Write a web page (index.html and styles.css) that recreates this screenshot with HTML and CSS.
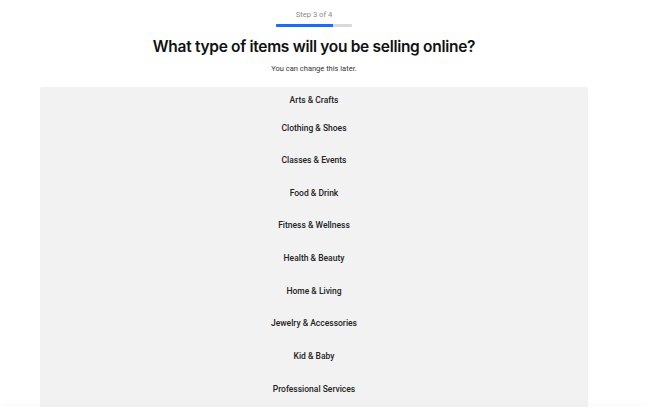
FILE: index.html
```html
<!DOCTYPE html>
<html lang="en">
<head>
<meta charset="utf-8">
<title>Step 3 of 4</title>
<link rel="stylesheet" href="styles.css">
</head>
<body>
<div class="page">
  <header class="progress">
    <div class="step-label">Step 3 of 4</div>
    <div class="track"><div class="fill" style="width: 75%"></div></div>
  </header>
  <h1 class="title">What type of items will you be selling online?</h1>
  <p class="subtitle">You can change this later.</p>
  <ul class="options">
    <li class="option first">Arts &amp; Crafts</li>
    <li class="option">Clothing &amp; Shoes</li>
    <li class="option">Classes &amp; Events</li>
    <li class="option">Food &amp; Drink</li>
    <li class="option">Fitness &amp; Wellness</li>
    <li class="option">Health &amp; Beauty</li>
    <li class="option">Home &amp; Living</li>
    <li class="option">Jewelry &amp; Accessories</li>
    <li class="option">Kid &amp; Baby</li>
    <li class="option">Professional Services</li>
  </ul>
</div>
<div class="footer-edge"></div>
</body>
</html>
```

FILE: styles.css
```css
html, body {
  margin: 0;
  padding: 0;
  background: #ffffff;
  overflow: hidden;
  height: 409px;
}
body {
  font-family: Roboto, "Noto Sans", sans-serif;
  color: #1a1a1a;
}
.page {
  width: 628px;
  display: flex;
  flex-direction: column;
  align-items: center;
}
.progress {
  margin-top: 9px;
  display: flex;
  flex-direction: column;
  align-items: center;
}
.step-label {
  font-size: 7.6px;
  line-height: 11px;
  color: #8a8a8a;
}
.track {
  margin-top: 4px;
  width: 76px;
  height: 3px;
  background: #d9d9d9;
  border-radius: 1px;
  overflow: hidden;
}
.fill {
  height: 100%;
  background: #1a6ef5;
}
.title {
  margin: 9px 0 0;
  font-family: Inter, "Noto Sans", sans-serif;
  font-size: 15.5px;
  line-height: 22px;
  font-weight: 600;
  letter-spacing: -0.3px;
  color: #111;
}
.subtitle {
  margin: 5px 0 0;
  font-size: 7.5px;
  line-height: 12px;
  color: #333;
}
.options {
  list-style: none;
  margin: 12px 0 0;
  padding: 2px 0 12px;
  width: 548px;
  background: #f2f2f2;
  border-radius: 2px 2px 0 0;
}
.option {
  height: 32.67px;
  line-height: 32.67px;
  text-align: center;
  font-size: 8.5px;
  font-weight: 500;
  color: #222;
}
.option.first {
  height: 22.5px;
  line-height: 22px;
}
.footer-edge {
  position: fixed;
  left: 0;
  right: 0;
  bottom: 0;
  height: 2px;
  background: #fff;
  box-shadow: 0 -3px 6px rgba(0, 0, 0, 0.05);
}
```
